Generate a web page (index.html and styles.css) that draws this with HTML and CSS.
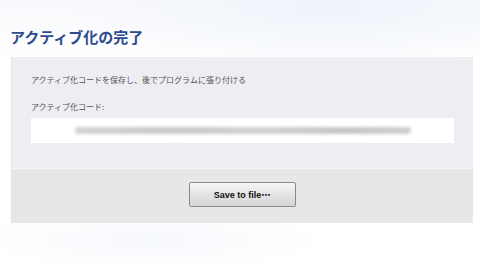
FILE: index.html
```html
<!doctype html>
<html>

<head>
  <meta charset="utf-8">
  <title>アクティブ化の完了</title>
  <link rel="stylesheet" href="styles.css">
</head>

<body>
  <div id="page">
    <h1 class="title">アクティブ化の完了</h1>

    <div class="panel">
      <div class="panel__body">
        <p class="note">アクティブ化コードを保存し、後でプログラムに張り付ける</p>
        <p class="label">アクティブ化コード:</p>
        <div class="code">
          <div class="code__blur"></div>
        </div>
      </div>
      <div class="panel__foot">
        <button class="btn">Save to file⋯</button>
      </div>
    </div>
  </div>
</body>

</html>
```

FILE: styles.css
```css
* {
  margin: 0;
  box-sizing: border-box;
}

body {
  margin: 0;
  width: 480px;
  height: 274px;
  overflow: hidden;
  font-family: "Noto Sans CJK JP", "Liberation Sans", sans-serif;
}

#page {
  width: 480px;
  height: 274px;
  padding: 28px 7px 0 11px;
  background:
    radial-gradient(ellipse 260px 60px at 330px 10px, rgba(237, 242, 250, 0.8), rgba(255, 255, 255, 0)),
    radial-gradient(ellipse 180px 30px at 150px 240px, rgba(244, 247, 252, 0.8), rgba(255, 255, 255, 0)),
    linear-gradient(#f8f9fc, #fff 60px, #fff);
}

.title {
  font-size: 15px;
  line-height: 18px;
  font-weight: bold;
  color: #2c4c8e;
  margin-left: -1px;
  height: 29px;
}

.panel {
  width: 462px;
  border-left: 1px solid #e2e2e6;
}

.panel__body {
  background: #eeeef2;
  padding: 18px 19px 25px 19px;
  height: 111px;
}

.note,
.label {
  font-size: 8px;
  line-height: 10px;
  color: #555;
}

.label {
  margin-top: 17px;
}

.code {
  margin-top: 6px;
  height: 25px;
  background: #fff;
  display: flex;
  align-items: center;
  justify-content: center;
}

.code__blur {
  width: 336px;
  height: 7px;
  background: linear-gradient(90deg, #d4d4d4, #c9c9c9 30%, #d2d2d2 55%, #c6c6c6 80%, #d0d0d0);
  border-radius: 3px;
  filter: blur(1.5px);
}

.panel__foot {
  background: #e7e7ea;
  border-top: 1px solid #f6f6f8;
  height: 55px;
  padding-top: 13px;
  display: flex;
  justify-content: center;
  align-items: flex-start;
}

.btn {
  width: 107px;
  height: 25px;
  margin-left: -1px;
  border: 1px solid #8a8a8a;
  border-radius: 2px;
  background: linear-gradient(#f6f6f6, #e4e4e4 50%, #d6d6d6);
  font-family: "Liberation Sans", "DejaVu Sans", sans-serif;
  font-weight: bold;
  font-size: 9px;
  color: #111;
  padding: 0;
}
```
